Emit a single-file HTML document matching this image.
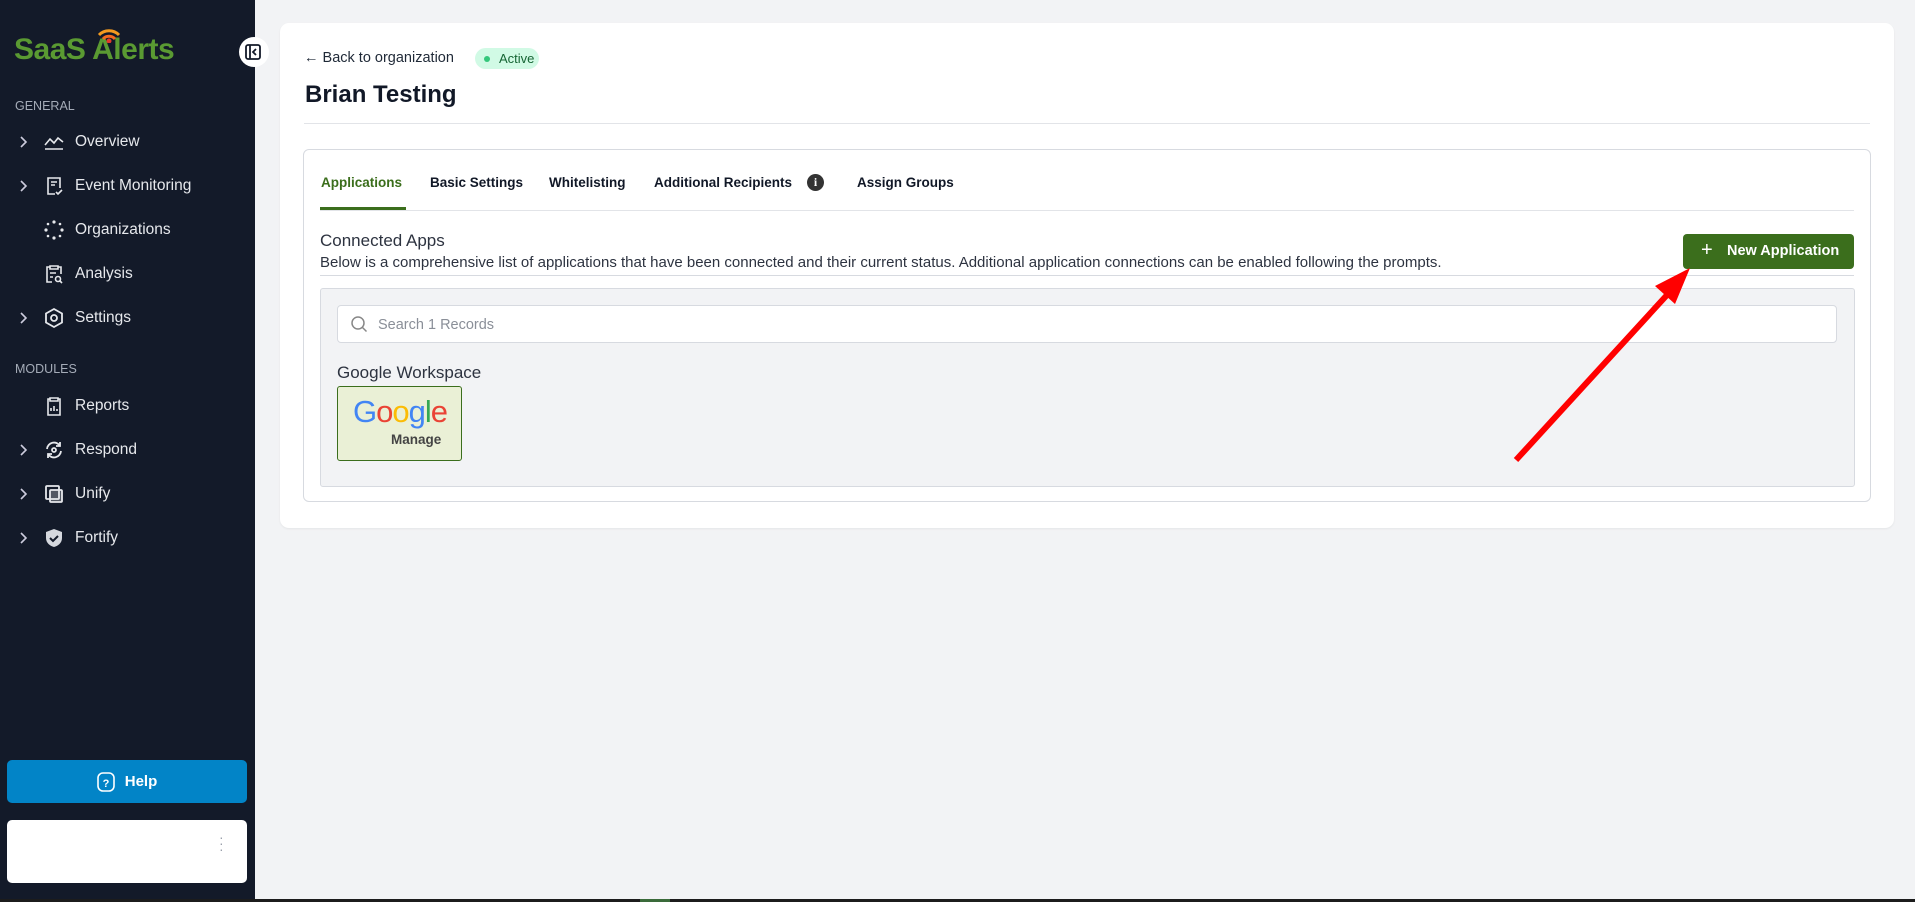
<!DOCTYPE html>
<html><head><meta charset="utf-8"><style>
*{box-sizing:border-box;margin:0;padding:0}
body{width:1915px;height:902px;background:#f2f3f5;font-family:"Liberation Sans",sans-serif;position:relative;overflow:hidden}
.sb{position:absolute;left:0;top:0;width:255px;height:899px;background:#131a29}
.bot{position:absolute;left:0;top:899px;width:1915px;height:3px;background:#1c1c1c}
.sec{position:absolute;left:15px;color:#a5acb8;font-size:12.5px}
.it{position:absolute;left:0;height:24px;display:flex;align-items:center;color:#e6e8ec;font-size:15.5px}
.it .ch{position:absolute;left:19px;top:5px}
.it svg.ic{position:absolute;left:43px;top:1px}
.it span{position:absolute;left:75px;white-space:nowrap}
.abs{position:absolute}
.tab{position:absolute;top:25px;font-size:13.5px;font-weight:bold;color:#111827;white-space:nowrap}
</style></head><body>
<div class="sb">
  <div class="abs" style="left:14px;top:33px;font-size:30px;font-weight:bold;color:#5a9a32;letter-spacing:-0.5px">SaaS <span style="position:relative">A<svg style="position:absolute;left:4px;top:-6px" width="26" height="16" viewBox="0 0 26 16"><path d="M3 8a14 14 0 0 1 20 0" stroke="#f29a1f" stroke-width="3" fill="none"/><path d="M7 12a8 8 0 0 1 12 0" stroke="#f26a1f" stroke-width="3" fill="none"/><circle cx="13" cy="14" r="2.5" fill="#e53a2a"/></svg></span>lerts</div>
  <div class="abs" style="left:239px;top:37px;width:30px;height:30px;border-radius:50%;background:#fff"><svg class="abs" style="left:6px;top:7px" width="16" height="16" viewBox="0 0 16 16"><rect x="1" y="1" width="14" height="14" rx="2" stroke="#131a29" stroke-width="1.8" fill="none"/><path d="M5 1v14M11 5l-3 3 3 3" stroke="#131a29" stroke-width="1.8" fill="none"/></svg></div>
  <div class="sec" style="top:99px">GENERAL</div>
  <div class="it" style="top:130px"><svg class="ch" width="10" height="14"><path d="M2 2l5 5-5 5" stroke="#ccd" stroke-width="1.6" fill="none"/></svg><svg class="ic" width="22" height="22" viewBox="0 0 22 22" fill="none" stroke="#e6e8ec" stroke-width="1.6"><path d="M2 14l5-6 4 4 4-5 5 4M2 18h18"/></svg><span>Overview</span></div>
  <div class="it" style="top:174px"><svg class="ch" width="10" height="14"><path d="M2 2l5 5-5 5" stroke="#ccd" stroke-width="1.6" fill="none"/></svg><svg class="ic" width="22" height="22" viewBox="0 0 22 22" fill="none" stroke="#e6e8ec" stroke-width="1.6"><path d="M12 19H5V3h12v10M8 7h6M8 10h4M13 17l2 2 4-4"/></svg><span>Event Monitoring</span></div>
  <div class="it" style="top:218px"><svg class="ic" width="22" height="22" viewBox="0 0 22 22" fill="#e6e8ec"><circle cx="11" cy="3" r="1.6"/><circle cx="11" cy="19" r="1.6"/><circle cx="3" cy="11" r="1.6"/><circle cx="19" cy="11" r="1.6"/><circle cx="5" cy="5" r="1.3"/><circle cx="17" cy="17" r="1.3"/><circle cx="17" cy="5" r="1.3"/><circle cx="5" cy="17" r="1.3"/></svg><span>Organizations</span></div>
  <div class="it" style="top:262px"><svg class="ic" width="22" height="22" viewBox="0 0 22 22" fill="none" stroke="#e6e8ec" stroke-width="1.6"><path d="M9 19H4V4h3M15 4h3v7M7 3h8v3H7zM7 10h6M7 14h3"/><circle cx="15" cy="16" r="2.5"/><path d="M17 18l2 2"/></svg><span>Analysis</span></div>
  <div class="it" style="top:306px"><svg class="ch" width="10" height="14"><path d="M2 2l5 5-5 5" stroke="#ccd" stroke-width="1.6" fill="none"/></svg><svg class="ic" width="22" height="22" viewBox="0 0 22 22" fill="none" stroke="#e6e8ec" stroke-width="1.8"><path d="M11 2l8 4.5v9L11 20l-8-4.5v-9z"/><circle cx="11" cy="11" r="3"/></svg><span>Settings</span></div>
  <div class="sec" style="top:362px">MODULES</div>
  <div class="it" style="top:394px"><svg class="ic" width="22" height="22" viewBox="0 0 22 22" fill="none" stroke="#e6e8ec" stroke-width="1.6"><path d="M7 4H5v16h12V4h-2M7 3h8v3H7zM8 16v-3M11 16v-5M14 16v-2"/></svg><span>Reports</span></div>
  <div class="it" style="top:438px"><svg class="ch" width="10" height="14"><path d="M2 2l5 5-5 5" stroke="#ccd" stroke-width="1.6" fill="none"/></svg><svg class="ic" width="22" height="22" viewBox="0 0 22 22" fill="none" stroke="#e6e8ec" stroke-width="1.8"><path d="M4 10a7 7 0 0 1 13-3M18 12a7 7 0 0 1-13 3M17 3v4h-4M5 19v-4h4"/><circle cx="11" cy="11" r="2"/></svg><span>Respond</span></div>
  <div class="it" style="top:482px"><svg class="ch" width="10" height="14"><path d="M2 2l5 5-5 5" stroke="#ccd" stroke-width="1.6" fill="none"/></svg><svg class="ic" width="22" height="22" viewBox="0 0 22 22" fill="none" stroke="#e6e8ec" stroke-width="1.8"><rect x="3" y="3" width="13" height="13" rx="1"/><rect x="7" y="7" width="12" height="12" rx="1" fill="#e6e8ec" fill-opacity=".3"/></svg><span>Unify</span></div>
  <div class="it" style="top:526px"><svg class="ch" width="10" height="14"><path d="M2 2l5 5-5 5" stroke="#ccd" stroke-width="1.6" fill="none"/></svg><svg class="ic" width="22" height="22" viewBox="0 0 22 22"><path d="M11 2l8 3v6c0 5-4 8-8 9-4-1-8-4-8-9V5z" fill="#d5d8de"/><path d="M7 11l3 3 5-5" stroke="#131a29" stroke-width="2" fill="none"/></svg><span>Fortify</span></div>
  <div class="abs" style="left:7px;top:760px;width:240px;height:43px;border-radius:5px;background:#0284c7;color:#fff;font-weight:bold;font-size:15px;display:flex;align-items:center;justify-content:center;gap:10px"><svg width="18" height="22" viewBox="0 0 18 22"><rect x="1" y="2" width="16" height="18" rx="5" stroke="#fff" stroke-width="1.6" fill="none"/><text x="9" y="16" font-size="11" font-weight="bold" fill="#fff" text-anchor="middle" font-family="Liberation Sans">?</text></svg>Help</div>
  <div class="abs" style="left:7px;top:820px;width:240px;height:63px;border-radius:5px;background:#fff"><div class="abs" style="left:212px;top:14px;color:#9aa0ab;font-size:14px;line-height:6px">·<br>·<br>·</div></div>
</div>
<div class="bot"><div class="abs" style="left:640px;top:0;width:30px;height:3px;background:#3a6a3a"></div></div>

<div class="abs" style="left:280px;top:23px;width:1614px;height:505px;background:#fff;border-radius:9px;box-shadow:0 1px 2px rgba(0,0,0,.06)">
  <div class="abs" style="left:24px;top:27px;font-size:14.5px;color:#1f2937;white-space:nowrap">&#8592; Back to organization</div>
  <div class="abs" style="left:195px;top:25px;width:64px;height:21px;border-radius:11px;background:#d1fae5;color:#166534;font-size:13px;line-height:21px;padding-left:24px"><span class="abs" style="left:9px;top:8px;width:6px;height:6px;border-radius:50%;background:#34c77b"></span>Active</div>
  <div class="abs" style="left:25px;top:58px;font-size:24px;font-weight:bold;color:#111827">Brian Testing</div>
  <div class="abs" style="left:24px;top:100px;width:1566px;height:1px;background:#e2e4e8"></div>
  <div class="abs" style="left:23px;top:126px;width:1568px;height:353px;border:1px solid #d7dae0;border-radius:6px">
    <div class="tab" style="left:17px;color:#3b6e1c">Applications</div>
    <div class="abs" style="left:16px;top:57px;width:86px;height:4px;background:#3b6e1c"></div>
    <div class="abs" style="left:16px;top:60px;width:1534px;height:1px;background:#e2e4e8"></div>
    <div class="tab" style="left:126px">Basic Settings</div>
    <div class="tab" style="left:245px">Whitelisting</div>
    <div class="tab" style="left:350px">Additional Recipients</div>
    <div class="abs" style="left:503px;top:24px;width:17px;height:17px;border-radius:50%;background:#333;color:#fff;font-size:12px;font-weight:bold;text-align:center;line-height:17px;font-family:'Liberation Serif',serif">i</div>
    <div class="tab" style="left:553px">Assign Groups</div>
    <div class="abs" style="left:16px;top:81px;font-size:17px;color:#2d3340">Connected Apps</div>
    <div class="abs" style="left:16px;top:104px;font-size:15px;color:#2d3340;white-space:nowrap">Below is a comprehensive list of applications that have been connected and their current status. Additional application connections can be enabled following the prompts.</div>
    <div class="abs" style="left:16px;top:125px;width:1534px;height:1px;background:#d7dae0"></div>
    <div class="abs" style="left:1379px;top:84px;width:171px;height:35px;border-radius:4px;background:#3b6e1c;color:#fff;font-size:14.5px;font-weight:bold;line-height:35px;padding-left:44px;white-space:nowrap"><span class="abs" style="left:18px;top:-1px;font-size:20px;font-weight:normal">+</span>New Application</div>
    <div class="abs" style="left:16px;top:138px;width:1535px;height:199px;background:#f2f3f5;border:1px solid #d7dae0;border-radius:3px">
      <div class="abs" style="left:16px;top:16px;width:1500px;height:38px;background:#fff;border:1px solid #d7dae0;border-radius:4px">
        <svg class="abs" style="left:12px;top:9px" width="18" height="18" viewBox="0 0 18 18"><circle cx="8" cy="8" r="6" stroke="#888" stroke-width="1.5" fill="none"/><path d="M12.5 12.5l4 4" stroke="#888" stroke-width="1.5"/></svg>
        <div class="abs" style="left:40px;top:11px;font-size:14.5px;color:#8a8f98">Search 1 Records</div>
      </div>
      <div class="abs" style="left:16px;top:74px;font-size:17px;color:#2d3340">Google Workspace</div>
      <div class="abs" style="left:16px;top:97px;width:125px;height:75px;background:#eaf0d6;border:1px solid #3b6e1c;border-radius:3px">
        <div class="abs" style="left:15px;top:7px;font-size:31px;letter-spacing:-1px"><span style="color:#4285f4">G</span><span style="color:#ea4335">o</span><span style="color:#fbbc05">o</span><span style="color:#4285f4">g</span><span style="color:#34a853">l</span><span style="color:#ea4335">e</span></div>
        <div class="abs" style="left:53px;top:45px;font-size:13.5px;font-weight:bold;color:#444">Manage</div>
      </div>
    </div>
  </div>
</div>
<svg class="abs" style="left:0;top:0" width="1915" height="902"><line x1="1516" y1="460" x2="1667" y2="295" stroke="#ff0000" stroke-width="6"/><polygon points="1690,268 1655,286 1675,304" fill="#ff0000"/></svg>
</body></html>
